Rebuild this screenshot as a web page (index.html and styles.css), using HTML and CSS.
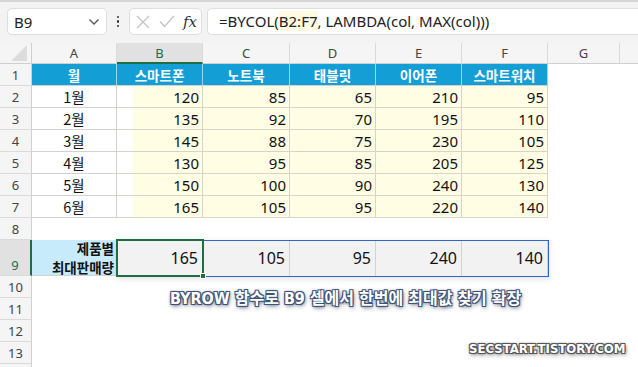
FILE: index.html
```html
<!DOCTYPE html>
<html lang="ko">
<head>
<meta charset="utf-8">
<link rel="stylesheet" href="styles.css">
</head>
<body>
<div class="app">
  <div class="toolbar">
    <div class="namebox">
      <span class="name">B9</span>
      <svg class="chev" width="12" height="8" viewBox="0 0 12 8"><path d="M1.5 1.5 L6 6 L10.5 1.5" fill="none" stroke="#555" stroke-width="1.3"/></svg>
    </div>
    <div class="dots"><i></i><i></i><i></i></div>
    <div class="fxbox">
      <svg width="14" height="14" viewBox="0 0 14 14"><path d="M1 1 L13 13 M13 1 L1 13" stroke="#c4c4c4" stroke-width="1.3" fill="none"/></svg>
      <svg width="16" height="13" viewBox="0 0 16 13"><path d="M1 6.5 L5.5 11.5 L15 1" stroke="#c4c4c4" stroke-width="1.3" fill="none"/></svg>
      <span class="fx">fx</span>
    </div>
    <div class="formula">=BYCOL(<span class="ref">B2:F7</span>, LAMBDA(col, MAX(col)))</div>
  </div>

  <div class="sheet">
    <div class="ch corner"><svg width="16" height="16" viewBox="0 0 16 16"><path d="M16 0 L16 16 L0 16 Z" fill="#dcdcdc"/></svg></div>
    <div class="ch">A</div><div class="ch sel">B</div><div class="ch">C</div><div class="ch">D</div><div class="ch">E</div><div class="ch">F</div><div class="ch">G</div><div class="ch last"></div>

    <div class="rh">1</div>
    <div class="c hd">월</div><div class="c hd">스마트폰</div><div class="c hd">노트북</div><div class="c hd">태블릿</div><div class="c hd">이어폰</div><div class="c hd">스마트워치</div><div class="c"></div><div class="c"></div>

    <div class="rh">2</div>
    <div class="c mo">1월</div><div class="c n nb">120</div><div class="c n">85</div><div class="c n">65</div><div class="c n">210</div><div class="c n">95</div><div class="c"></div><div class="c"></div>

    <div class="rh">3</div>
    <div class="c mo">2월</div><div class="c n nb">135</div><div class="c n">92</div><div class="c n">70</div><div class="c n">195</div><div class="c n">110</div><div class="c"></div><div class="c"></div>

    <div class="rh">4</div>
    <div class="c mo">3월</div><div class="c n nb">145</div><div class="c n">88</div><div class="c n">75</div><div class="c n">230</div><div class="c n">105</div><div class="c"></div><div class="c"></div>

    <div class="rh">5</div>
    <div class="c mo">4월</div><div class="c n nb">130</div><div class="c n">95</div><div class="c n">85</div><div class="c n">205</div><div class="c n">125</div><div class="c"></div><div class="c"></div>

    <div class="rh">6</div>
    <div class="c mo">5월</div><div class="c n nb">150</div><div class="c n">100</div><div class="c n">90</div><div class="c n">240</div><div class="c n">130</div><div class="c"></div><div class="c"></div>

    <div class="rh">7</div>
    <div class="c mo">6월</div><div class="c n nb">165</div><div class="c n">105</div><div class="c n">95</div><div class="c n">220</div><div class="c n">140</div><div class="c"></div><div class="c"></div>

    <div class="rh">8</div>
    <div class="c"></div><div class="c"></div><div class="c"></div><div class="c"></div><div class="c"></div><div class="c"></div><div class="c"></div><div class="c"></div>

    <div class="rh rsel">9</div>
    <div class="c lbl"><span>제품별</span><span>최대판매량</span></div><div class="c r9">165</div><div class="c r9">105</div><div class="c r9">95</div><div class="c r9">240</div><div class="c r9 r9l">140</div><div class="c"></div><div class="c"></div>

    <div class="rh">10</div>
    <div class="c"></div><div class="c"></div><div class="c"></div><div class="c"></div><div class="c"></div><div class="c"></div><div class="c"></div><div class="c"></div>
    <div class="rh">11</div>
    <div class="c"></div><div class="c"></div><div class="c"></div><div class="c"></div><div class="c"></div><div class="c"></div><div class="c"></div><div class="c"></div>
    <div class="rh">12</div>
    <div class="c"></div><div class="c"></div><div class="c"></div><div class="c"></div><div class="c"></div><div class="c"></div><div class="c"></div><div class="c"></div>
    <div class="rh">13</div>
    <div class="c"></div><div class="c"></div><div class="c"></div><div class="c"></div><div class="c"></div><div class="c"></div><div class="c"></div><div class="c"></div>
    <div class="rh"></div>
    <div class="c"></div><div class="c"></div><div class="c"></div><div class="c"></div><div class="c"></div><div class="c"></div><div class="c"></div><div class="c"></div>

    <div class="range"></div>
    <div class="active"><i class="handle"></i></div>
    <div class="caption">BYROW 함수로 B9 셀에서 한번에 최대값 찾기 확장</div>
    <div class="mark">SECSTART.TISTORY.COM</div>
  </div>
</div>
</body>
</html>
```

FILE: styles.css
```css
* { box-sizing: border-box; }
html, body { margin: 0; padding: 0; background: #fff; }
body { width: 638px; height: 367px; overflow: hidden; font-family: "Noto Sans", "Noto Sans CJK KR", sans-serif; }
.app { width: 638px; height: 367px; overflow: hidden; }

.toolbar {
  height: 43px;
  background: #f3f3f3;
  border-top: 2px solid #d6d6d6;
  display: flex;
  align-items: flex-start;
  padding: 6px 0 0 7px;
}
.namebox {
  width: 100px; height: 27px;
  background: #fff;
  border: 1px solid #dedede;
  border-radius: 5px;
  display: flex; align-items: center; justify-content: space-between;
  padding: 0 6px 0 6px;
}
.name { font-size: 15px; color: #222; }
.chev { margin-top: 1px; }
.dots { width: 22px; height: 27px; display: flex; flex-direction: column; align-items: center; justify-content: center; gap: 2px; }
.dots i { display: block; width: 2.5px; height: 2.5px; background: #333; border-radius: 1px; }
.fxbox {
  width: 73px; height: 27px;
  background: #fff;
  border: 1px solid #dedede;
  border-radius: 5px;
  display: flex; align-items: center; gap: 9px;
  padding-left: 6px;
}
.fx { font-family: "DejaVu Serif", "Liberation Serif", serif; font-style: italic; font-size: 15px; color: #333; margin-left: -1px; }
.formula {
  margin-left: 5px;
  flex: 1;
  height: 27px;
  background: #fff;
  border: 1px solid #dedede;
  border-right: none;
  border-radius: 5px 0 0 5px;
  padding-left: 11px;
  font-size: 15px; color: #222;
  line-height: 25px;
  white-space: nowrap;
}
.ref { background: #fffbe3; }

.sheet {
  position: relative;
  display: grid;
  grid-template-columns: 32px 85px 86px 87px 86px 86px 86px 72px 18px;
  grid-template-rows: 21px repeat(8, 22px) 36px repeat(5, 22px);
}
.ch {
  background: #f5f5f5;
  border-right: 1px solid #dadada;
  border-bottom: 1px solid #cfcfcf;
  font-size: 13px; color: #444;
  display: flex; align-items: center; justify-content: center;
}
.ch.corner { align-items: flex-end; justify-content: flex-end; padding: 0 4px 2px 0; border-right: 1px solid #cfcfcf; }
.ch.sel { background: #e1e1e1; color: #1f6e43; border-bottom: 2px solid #1f6e43; }
.ch.last { border-right: none; }
.rh {
  background: #f5f5f5;
  border-right: 1px solid #cfcfcf;
  border-bottom: 1px solid #dadada;
  font-size: 13px; color: #444;
  display: flex; align-items: center; justify-content: center;
}
.rh.rsel { background: #e1e1e1; color: #1f6e43; border-right: 2px solid #1f6e43; align-items: flex-end; padding-bottom: 1px; }

.c { font-size: 15px; color: #111; display: flex; align-items: center; }
.hd {
  background: #139fd6; color: #fff; font-weight: bold;
  font-family: "Noto Sans CJK KR", sans-serif; font-size: 13.5px;
  justify-content: center;
  border-right: 1px solid #9fd3ee;
  border-bottom: 1px solid #d2d2d2;
}
.mo {
  justify-content: center;
  font-family: "Noto Sans CJK KR", sans-serif; font-size: 14.5px;
  border-right: 1px solid #d2d2d2; border-bottom: 1px solid #d2d2d2;
}
.n {
  justify-content: flex-end; padding-right: 3px;
  background: #fffde3;
  border-right: 1px solid #d5d5c8; border-bottom: 1px solid #d5d5c8;
}
.n.nb { background: linear-gradient(to right, #fff 16px, #fffde3 16px); }
.lbl {
  background: #c8ebfb;
  flex-direction: column; align-items: flex-end; justify-content: center;
  padding-right: 3px;
  font-family: "Noto Sans CJK KR", sans-serif; font-weight: bold; font-size: 13.5px;
  line-height: 19px;
  color: #111;
  border-bottom: 1px solid #d2d2d2;
}
.r9 {
  justify-content: flex-end; padding-right: 4px;
  background: #f2f2f2;
  font-size: 16px;
  border-right: 1px solid #d2d2d2;
}

.range {
  position: absolute; left: 117px; top: 197px; width: 432px; height: 37px;
  border: 1.5px solid #2f67c9;
  box-shadow: 0 2px 6px rgba(0,0,0,0.12);
  pointer-events: none;
}
.active {
  position: absolute; left: 116px; top: 196px; width: 88px; height: 38px;
  border: 2px solid #1f6e43;
}
.handle { position: absolute; right: -4px; bottom: -4px; width: 6px; height: 6px; background: #1f6e43; border: 1px solid #fff; }

.caption {
  position: absolute; left: 170px; top: 242px;
  font-family: "DejaVu Sans Condensed", "Noto Sans CJK KR", sans-serif; font-weight: bold; font-size: 16px;
  color: #fff; white-space: nowrap;
  text-shadow: 1px 1px 0 #3e5376, -1px -1px 0 #3e5376, 1px -1px 0 #3e5376, -1px 1px 0 #3e5376, 0 0 3px #3e5376, 1px 2px 4px rgba(30,40,70,0.7);
}
.mark {
  position: absolute; left: 469px; top: 298px;
  font-family: "DejaVu Sans Condensed", sans-serif; font-weight: bold; font-size: 13px;
  color: #fff; white-space: nowrap;
  text-shadow: 1px 1px 0 #555, -1px -1px 0 #555, 1px -1px 0 #555, -1px 1px 0 #555, 0 0 3px #555, 1px 2px 4px rgba(0,0,0,0.6);
}
```
